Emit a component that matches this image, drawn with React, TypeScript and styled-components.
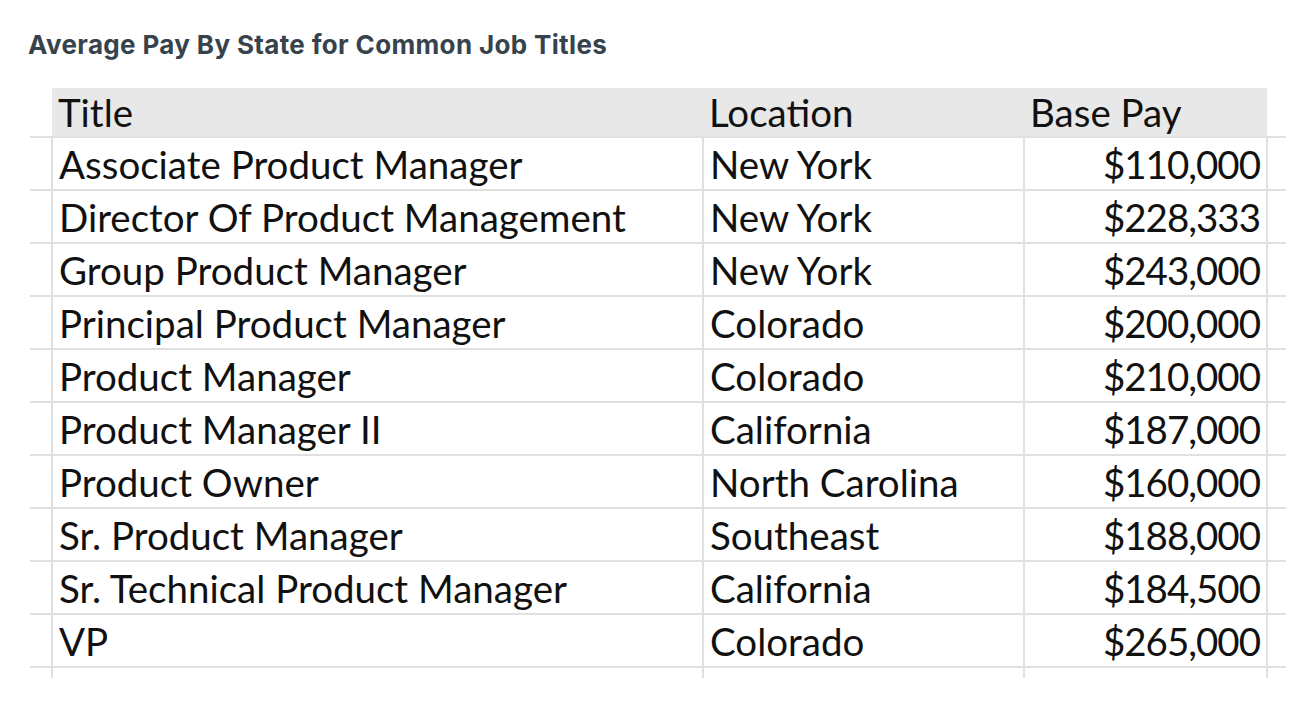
import styled, { createGlobalStyle } from 'styled-components';

const GlobalStyle = createGlobalStyle`
  html, body {
    margin: 0;
    padding: 0;
    background: #ffffff;
  }
`;

const rows = [
  { title: 'Associate Product Manager', location: 'New York', pay: '$110,000' },
  { title: 'Director Of Product Management', location: 'New York', pay: '$228,333' },
  { title: 'Group Product Manager', location: 'New York', pay: '$243,000' },
  { title: 'Principal Product Manager', location: 'Colorado', pay: '$200,000' },
  { title: 'Product Manager', location: 'Colorado', pay: '$210,000' },
  { title: 'Product Manager II', location: 'California', pay: '$187,000' },
  { title: 'Product Owner', location: 'North Carolina', pay: '$160,000' },
  { title: 'Sr. Product Manager', location: 'Southeast', pay: '$188,000' },
  { title: 'Sr. Technical Product Manager', location: 'California', pay: '$184,500' },
  { title: 'VP', location: 'Colorado', pay: '$265,000' },
];

const Page = styled.div`
  padding: 30px 0 0 0;
`;

const Heading = styled.h2`
  margin: 0 0 0 28px;
  font-family: Inter, Roboto, 'Liberation Sans', sans-serif;
  font-size: 26px;
  font-weight: 700;
  letter-spacing: 0.35px;
  line-height: 30px;
  color: #37434c;
`;

const Sheet = styled.table`
  margin: 28px 0 0 30px;
  border-collapse: collapse;
  table-layout: fixed;
  font-family: Lato, 'Liberation Sans', sans-serif;
  font-size: 38.5px;
  color: #111111;
`;

const Col = styled.col<{ $w: number }>`
  width: ${(p) => p.$w}px;
`;

const HeadCell = styled.th<{ $stub?: boolean }>`
  height: 48px;
  padding: 0 6px;
  text-align: left;
  font-weight: 400;
  background: ${(p) => (p.$stub ? 'transparent' : '#e8e8e8')};
  border: none;
  border-bottom: 2px solid #e0e0e0;
  vertical-align: middle;
`;

const Cell = styled.td<{ $right?: boolean; $stub?: boolean }>`
  height: 51px;
  padding: 0 6px;
  white-space: nowrap;
  text-align: ${(p) => (p.$right ? 'right' : 'left')};
  letter-spacing: ${(p) => (p.$right ? '-1px' : 'normal')};
  border: 2px solid #e0e0e0;
  ${(p) => p.$stub && 'border-left: none; border-right: none; padding: 0;'}
`;

const TailCell = styled.td<{ $stub?: boolean }>`
  height: 10px;
  padding: 0;
  border-top: 2px solid #e0e0e0;
  border-bottom: none;
  border-left: ${(p) => (p.$stub ? 'none' : '2px solid #e0e0e0')};
  border-right: ${(p) => (p.$stub ? 'none' : '2px solid #e0e0e0')};
`;

export default function App() {
  return (
    <Page>
      <GlobalStyle />
      <Heading>Average Pay By State for Common Job Titles</Heading>
      <Sheet>
        <colgroup>
          <Col $w={22} />
          <Col $w={651} />
          <Col $w={321} />
          <Col $w={243} />
          <Col $w={19} />
        </colgroup>
        <thead>
          <tr>
            <HeadCell $stub />
            <HeadCell>Title</HeadCell>
            <HeadCell>Location</HeadCell>
            <HeadCell>Base Pay</HeadCell>
            <HeadCell $stub />
          </tr>
        </thead>
        <tbody>
          {rows.map((r) => (
            <tr key={r.title}>
              <Cell $stub />
              <Cell>{r.title}</Cell>
              <Cell>{r.location}</Cell>
              <Cell $right>{r.pay}</Cell>
              <Cell $stub />
            </tr>
          ))}
          <tr>
            <TailCell $stub />
            <TailCell />
            <TailCell />
            <TailCell />
            <TailCell $stub />
          </tr>
        </tbody>
      </Sheet>
    </Page>
  );
}
